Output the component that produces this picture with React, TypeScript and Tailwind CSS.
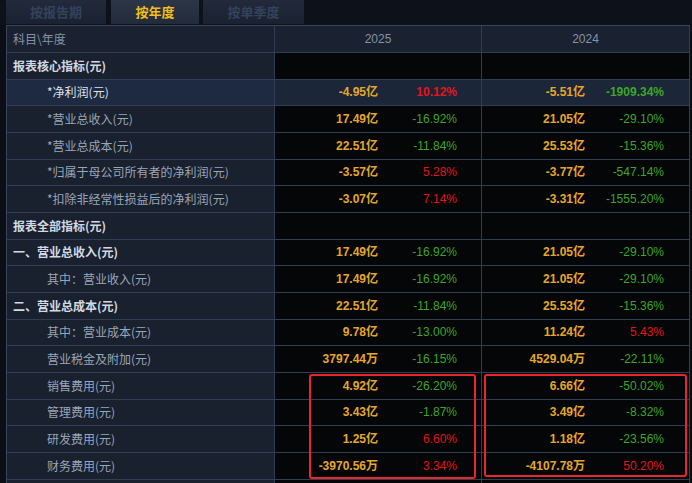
import React from "react";

type Row = {
  label: string;
  kind: "section" | "main" | "sub";
  hl?: boolean;
  v25?: string;
  p25?: string;
  v24?: string;
  p24?: string;
};

const rows: Row[] = [
  { label: "报表核心指标(元)", kind: "section" },
  { label: "*净利润(元)", kind: "sub", hl: true, v25: "-4.95亿", p25: "10.12%", v24: "-5.51亿", p24: "-1909.34%" },
  { label: "*营业总收入(元)", kind: "sub", v25: "17.49亿", p25: "-16.92%", v24: "21.05亿", p24: "-29.10%" },
  { label: "*营业总成本(元)", kind: "sub", v25: "22.51亿", p25: "-11.84%", v24: "25.53亿", p24: "-15.36%" },
  { label: "*归属于母公司所有者的净利润(元)", kind: "sub", v25: "-3.57亿", p25: "5.28%", v24: "-3.77亿", p24: "-547.14%" },
  { label: "*扣除非经常性损益后的净利润(元)", kind: "sub", v25: "-3.07亿", p25: "7.14%", v24: "-3.31亿", p24: "-1555.20%" },
  { label: "报表全部指标(元)", kind: "section" },
  { label: "一、营业总收入(元)", kind: "main", v25: "17.49亿", p25: "-16.92%", v24: "21.05亿", p24: "-29.10%" },
  { label: "其中：营业收入(元)", kind: "sub", v25: "17.49亿", p25: "-16.92%", v24: "21.05亿", p24: "-29.10%" },
  { label: "二、营业总成本(元)", kind: "main", v25: "22.51亿", p25: "-11.84%", v24: "25.53亿", p24: "-15.36%" },
  { label: "其中：营业成本(元)", kind: "sub", v25: "9.78亿", p25: "-13.00%", v24: "11.24亿", p24: "5.43%" },
  { label: "营业税金及附加(元)", kind: "sub", v25: "3797.44万", p25: "-16.15%", v24: "4529.04万", p24: "-22.11%" },
  { label: "销售费用(元)", kind: "sub", v25: "4.92亿", p25: "-26.20%", v24: "6.66亿", p24: "-50.02%" },
  { label: "管理费用(元)", kind: "sub", v25: "3.43亿", p25: "-1.87%", v24: "3.49亿", p24: "-8.32%" },
  { label: "研发费用(元)", kind: "sub", v25: "1.25亿", p25: "6.60%", v24: "1.18亿", p24: "-23.56%" },
  { label: "财务费用(元)", kind: "sub", v25: "-3970.56万", p25: "3.34%", v24: "-4107.78万", p24: "50.20%" },
  { label: "", kind: "sub" },
];

const cjk = { fontFamily: '"Noto Sans CJK SC", "Noto Sans", sans-serif' };
const num = { fontFamily: '"Liberation Sans", "Noto Sans CJK SC", sans-serif' };

const Pct = ({ p, bold }: { p?: string; bold?: boolean }) => {
  if (!p) return <div className="w-[79px]" />;
  const color = p.startsWith("-") ? "text-[#3ea52a]" : "text-[#e3141c]";
  return (
    <div className={`w-[79px] text-right ${color} ${bold ? "font-bold" : ""}`} style={num}>
      {p}
    </div>
  );
};

const DataCell = ({ v, p, hl, bold }: { v?: string; p?: string; hl?: boolean; bold?: boolean }) => (
  <div
    className={`flex items-center text-[12px] border-r border-[#323c52] ${
      hl ? "bg-[#1b2639]" : "bg-[#050607]"
    }`}
  >
    <div className="w-[103px] text-right font-bold text-[#e6a62a]" style={num}>
      {v}
    </div>
    <Pct p={p} bold={bold} />
  </div>
);

const Tab = ({ label, active }: { label: string; active?: boolean }) => (
  <div
    className={`h-[24px] flex items-center justify-center text-[13px] font-bold ${
      active
        ? "bg-gradient-to-b from-[#2c3647] to-[#222b3a] text-[#f0bd1a]"
        : "bg-gradient-to-b from-[#222a3b] to-[#1a2130] text-[#34425c]"
    }`}
    style={cjk}
  >
    {label}
  </div>
);

export default function App() {
  return (
    <div className="w-[692px] h-[483px] overflow-hidden bg-[#0b0e15]" style={cjk}>
      <div className="h-[25px] flex pl-[6px] bg-[#0d111a]">
        <div className="w-[100px]">
          <Tab label="按报告期" />
        </div>
        <div className="w-[88px] ml-[5px]">
          <Tab label="按年度" active />
        </div>
        <div className="w-[101px] ml-[4px]">
          <Tab label="按单季度" />
        </div>
      </div>

      <div className="relative ml-[6px] w-[684px] border-l border-t border-[#3a455b]">
        <div className="grid grid-cols-[268px_207px_208px] h-[27px] border-b border-[#323c52] bg-[#1a2231] text-[12px] text-[#8591a6]">
          <div className="flex items-center pl-[6px] border-r border-[#323c52]">科目\年度</div>
          <div className="flex items-center justify-center border-r border-[#323c52]" style={num}>
            2025
          </div>
          <div className="flex items-center justify-center border-r border-[#323c52]" style={num}>
            2024
          </div>
        </div>

        {rows.map((r, i) => (
          <div
            key={i}
            className="grid grid-cols-[268px_207px_208px] h-[26.67px] border-b border-[#323c52]"
          >
            <div
              className={`flex items-center text-[12px] border-r border-[#323c52] ${
                r.hl ? "bg-[#1d2a41]" : "bg-[#19212f]"
              } ${
                r.kind === "sub"
                  ? `pl-[40px] ${r.hl ? "text-[#dfe4ec]" : "text-[#9aa5b8]"}`
                  : "pl-[6px] font-bold text-[#d3d9e3]"
              }`}
            >
              {r.label}
            </div>
            <DataCell v={r.v25} p={r.p25} hl={r.hl} bold={r.hl} />
            <DataCell v={r.v24} p={r.p24} hl={r.hl} bold={r.hl} />
          </div>
        ))}

        <div className="absolute left-[302px] top-[348px] w-[167px] h-[105px] border-2 border-[#e8262b] rounded-[3px]" />
        <div className="absolute left-[477px] top-[348px] w-[203px] h-[103px] border-2 border-[#e8262b] rounded-[3px]" />
      </div>
    </div>
  );
}
